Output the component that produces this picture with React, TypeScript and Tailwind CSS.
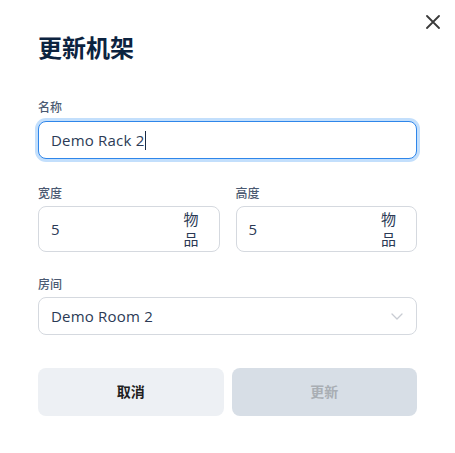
const latin = { fontFamily: '"Open Sans", "Noto Sans CJK SC", sans-serif' };

function Label({ children }: { children: string }) {
  return (
    <div className="text-[12px] leading-4 font-medium text-[#4b5a72]">{children}</div>
  );
}

function SizeInput({ value, unit }: { value: string; unit: string }) {
  return (
    <div className="flex h-[46px] items-center rounded-lg border border-[#d5d9df] bg-white pl-3 pr-[19px]">
      <span className="flex-1 text-[15px] text-[#2b3a55]">{value}</span>
      <span className="w-4 text-[15px] leading-5 text-[#2b3a55]">{unit}</span>
    </div>
  );
}

export default function App() {
  return (
    <div className="relative min-h-screen bg-white px-[38px] pt-8" style={latin}>
      {/* close */}
      <button className="absolute right-[15px] top-[15px] text-[#3a3a3a]">
        <svg width="14" height="14" viewBox="0 0 14 14" fill="none">
          <path d="M1 1L13 13M13 1L1 13" stroke="currentColor" strokeWidth="1.8" strokeLinecap="round" />
        </svg>
      </button>

      <h1 className="text-2xl leading-8 font-bold text-[#0c2340]">更新机架</h1>

      {/* name */}
      <div className="mt-9">
        <Label>名称</Label>
        <div className="mt-[5px] flex h-[38px] items-center rounded-lg border border-[#2f86ea] bg-white px-3 ring-3 ring-[#c3dffc]">
          <span className="text-[15px] tracking-[0.2px] text-[#2b3a55]">Demo Rack 2</span>
          <span className="ml-px h-[19px] w-px bg-[#1a2a44]" />
        </div>
      </div>

      {/* width / height */}
      <div className="mt-[27px] grid grid-cols-2 gap-4">
        <div>
          <Label>宽度</Label>
          <div className="mt-1">
            <SizeInput value="5" unit="物品" />
          </div>
        </div>
        <div>
          <Label>高度</Label>
          <div className="mt-1">
            <SizeInput value="5" unit="物品" />
          </div>
        </div>
      </div>

      {/* room */}
      <div className="mt-[25px]">
        <Label>房间</Label>
        <div className="mt-1 flex h-[38px] items-center justify-between rounded-lg border border-[#d5d9df] bg-white pl-3 pr-[13px]">
          <span className="text-[15px] tracking-[0.2px] text-[#2b3a55]">Demo Room 2</span>
          <svg width="12" height="7" viewBox="0 0 12 7" fill="none">
            <path d="M1 1L6 6L11 1" stroke="#c8ccd3" strokeWidth="1.3" strokeLinecap="round" strokeLinejoin="round" />
          </svg>
        </div>
      </div>

      {/* actions */}
      <div className="mt-[33px] grid grid-cols-2 gap-2">
        <button className="h-12 rounded-lg bg-[#edf0f4] text-sm font-bold text-[#1f1f1f]">取消</button>
        <button className="h-12 rounded-lg bg-[#d7dee6] text-sm font-bold text-[#a9aeb4]" disabled>
          更新
        </button>
      </div>
    </div>
  );
}
